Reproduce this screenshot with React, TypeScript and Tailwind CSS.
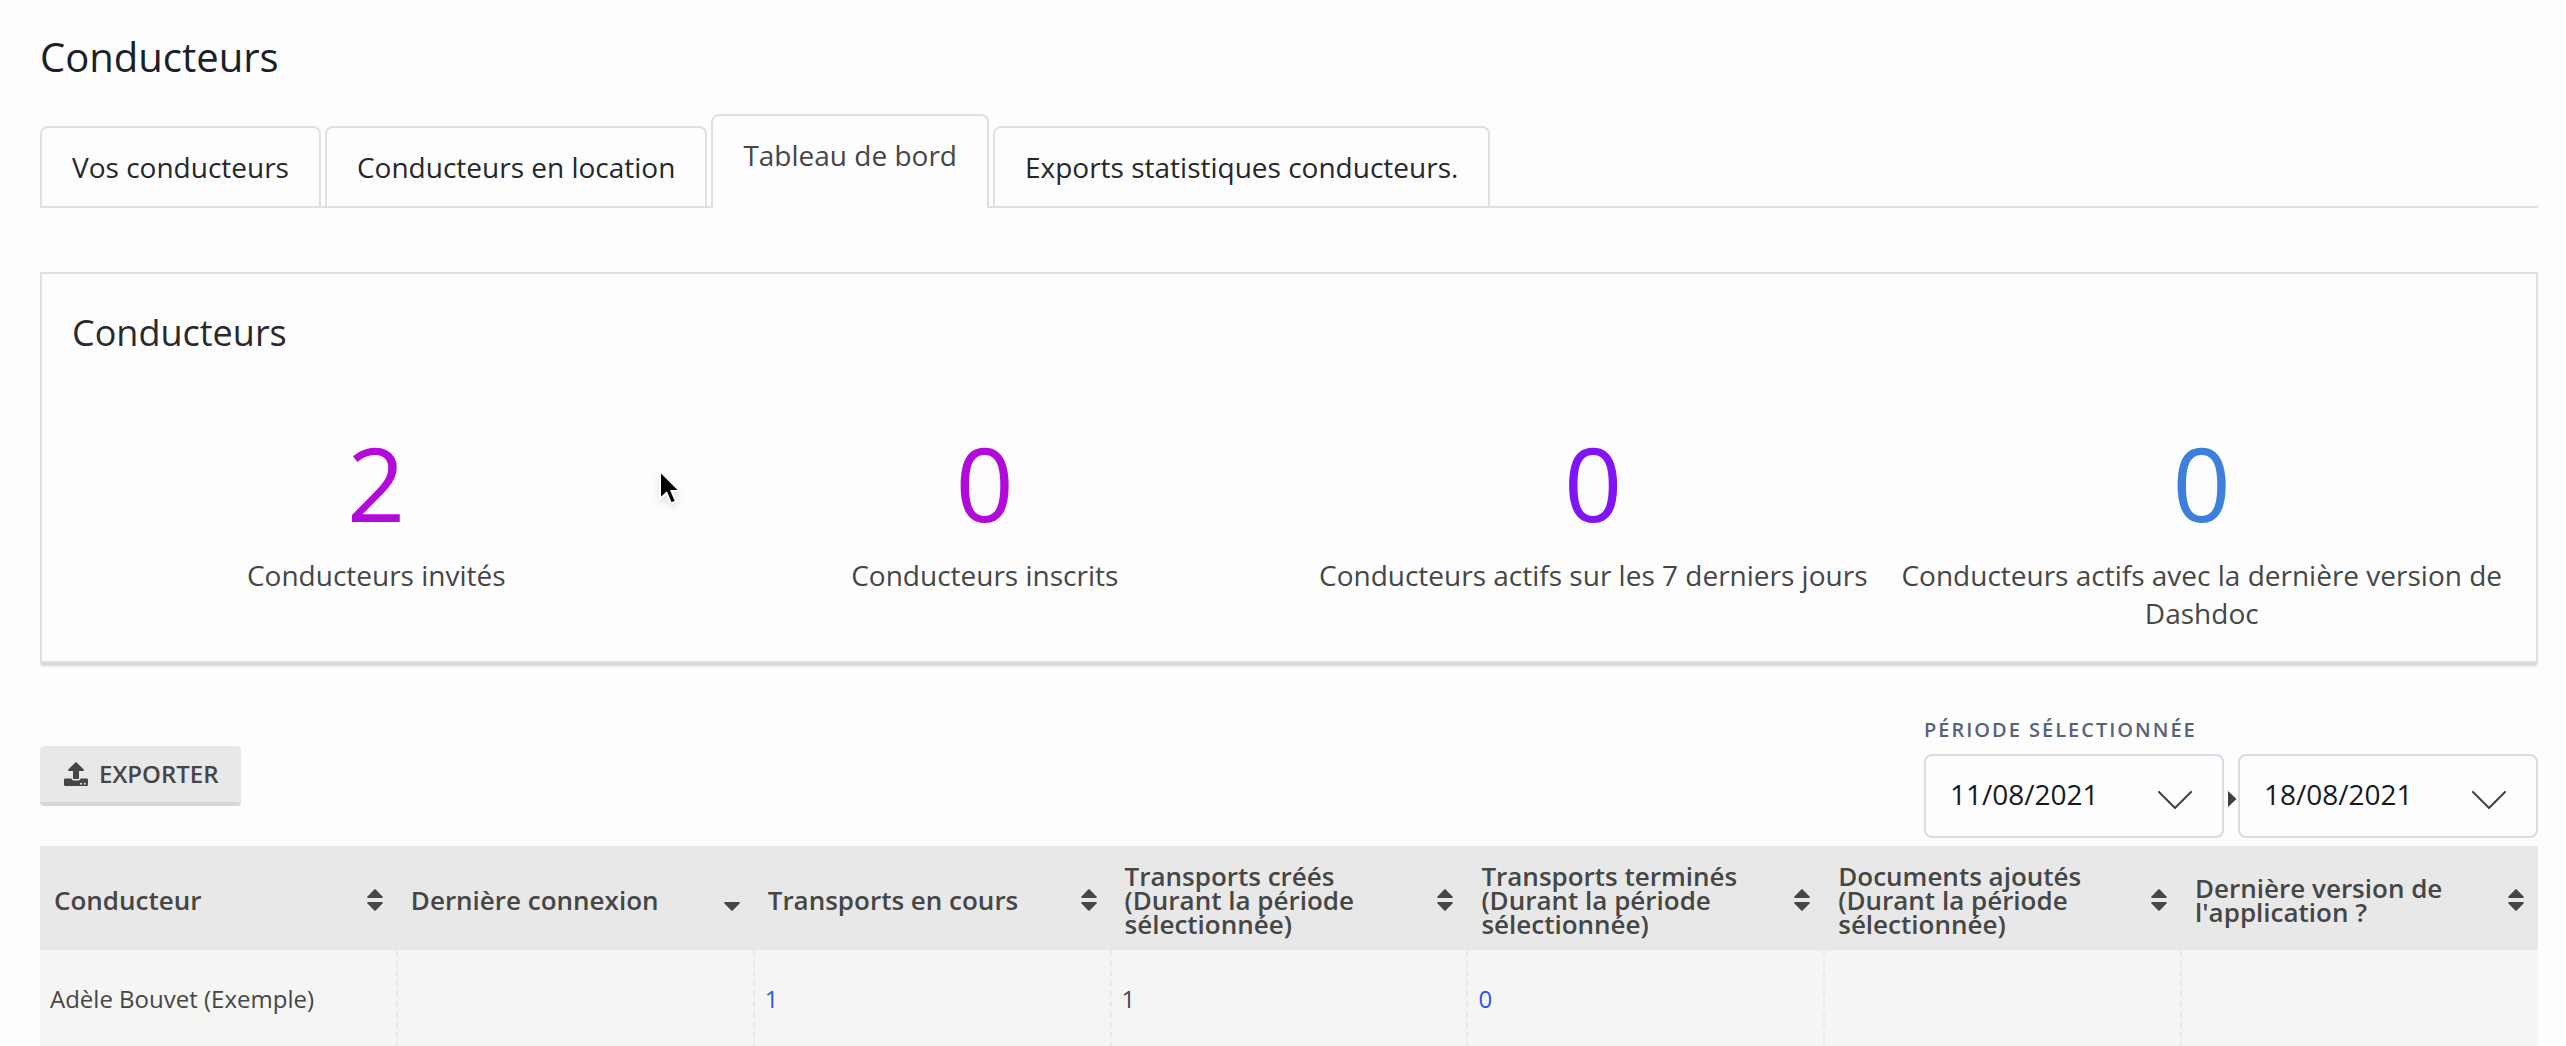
import { useState } from "react";

const tabs = ["Vos conducteurs", "Conducteurs en location", "Tableau de bord", "Exports statistiques conducteurs."];

const stats = [
  { value: 2, label: "Conducteurs invités", color: "text-[#b20adb]" },
  { value: 0, label: "Conducteurs inscrits", color: "text-[#b20adb]" },
  { value: 0, label: "Conducteurs actifs sur les 7 derniers jours", color: "text-[#8014f5]" },
  { value: 0, label: "Conducteurs actifs avec la dernière version de Dashdoc", color: "text-[#3d80dc]" },
];

const columns = [
  "Conducteur",
  "Dernière connexion",
  "Transports en cours",
  "Transports créés (Durant la période sélectionnée)",
  "Transports terminés (Durant la période sélectionnée)",
  "Documents ajoutés (Durant la période sélectionnée)",
  "Dernière version de l'application ?",
];

function SortIcon({ descending }: { descending: boolean }) {
  return (
    <svg viewBox="0 0 16 22" className="h-[22px] w-4 shrink-0" fill="currentColor" aria-hidden="true">
      {!descending && <path d="M7.3.4a1 1 0 0 1 1.4 0l6.8 7.2c.6.7.3 1.4-.5 1.4H1C.2 9-.1 8.300.5 7.600z" />}
      <path d="M1 13h14c.8 0 1.100.7.5 1.400l-6.800 7.200a1 1 0 0 1-1.400 0L.5 14.400C-.1 13.700.2 13 1 13z" />
    </svg>
  );
}

function UploadIcon() {
  return (
    <svg viewBox="0 0 24 24" className="mx-[2px] h-6 w-6" fill="currentColor" aria-hidden="true">
      <path d="M11.300.4a1 1 0 0 1 1.400 0l7 7c.7.7.3 1.600-.6 1.600H15v7.200a.8.800 0 0 1-.8.800H9.800a.8.800 0 0 1-.8-.8V9H4.900c-.9 0-1.300-.9-.6-1.600z" />
      <path
        fillRule="evenodd"
        d="M1.200 16.500H7.500c.2 1.300 1.200 2 2.300 2h4.400c1.100 0 2.100-.7 2.300-2h6.300c.7 0 1.200.5 1.200 1.200v5.100c0 .7-.5 1.200-1.200 1.200H1.200C.5 24 0 23.500 0 22.800v-5.100c0-.7.5-1.200 1.200-1.200zM17 20.800a1 1 0 1 0 0 2 1 1 0 0 0 0-2zm3.700 0a1 1 0 1 0 0 2 1 1 0 0 0 0-2z"
      />
    </svg>
  );
}

function DateSelect({ label, value }: { label: string; value: string }) {
  return (
    <div className="relative w-[300px]">
      <select
        aria-label={label}
        className="h-[84px] w-full appearance-none rounded-lg border-2 border-[#d9dbe6] bg-transparent px-6 pb-1 text-[28px] text-[#16191f]"
      >
        <option>{value}</option>
      </select>
      <svg
        viewBox="0 0 34 18"
        className="pointer-events-none absolute top-[37px] right-8 h-[18px] w-[34px]"
        fill="none"
        stroke="#3f3f3f"
        strokeWidth="2"
        strokeLinecap="round"
        strokeLinejoin="round"
        aria-hidden="true"
      >
        <path d="M1 1l16 16L33 1" />
      </svg>
    </div>
  );
}

function Cursor() {
  return (
    <svg viewBox="0 0 26 38" className="pointer-events-none absolute top-[470px] left-[657px] h-[38px] w-[26px] drop-shadow-md" aria-hidden="true">
      <path d="M3 1v28l6.500-6 4.500 10.500 5-2.200-4.500-10.300H23z" fill="#000" stroke="#fff" strokeWidth="2" />
    </svg>
  );
}

export default function App() {
  const [active, setActive] = useState(2);
  return (
    <main className="relative min-h-screen bg-[#fdfdfd] px-10 pr-7 font-['Open_Sans',sans-serif] text-[#464646]">
      <h1 className="pt-[30px] text-[40px] leading-[54px] text-[#1b2027]">Conducteurs</h1>

      <div role="tablist" className="mt-[30px] flex items-end gap-1 border-b-2 border-[#dfdfe6]">
        {tabs.map((tab, i) => (
          <button
            key={tab}
            role="tab"
            aria-selected={i === active}
            onClick={() => setActive(i)}
            className={
              i === active
                ? "-mb-[2px] h-[94px] rounded-t-lg border-2 border-b-0 border-[#dfdfe6] bg-[#fdfdfd] px-[30px] pb-[14px] text-[28px] text-[#464646]"
                : "h-20 rounded-t-lg border-2 border-b-0 border-[#dfdfe6] px-[30px] text-[28px] text-[#25272b]"
            }
          >
            {tab}
          </button>
        ))}
      </div>

      <section className="mt-16 border-2 border-[#dfdfe4] px-[30px] pt-[34px] pb-[13px] shadow-[0_4px_2px_-1px_#d6d6d6]">
        <h2 className="text-4xl leading-[50px] text-[#2a2a2c]">Conducteurs</h2>
        <div className="mt-[60px] grid grid-cols-4">
          {stats.map((s) => (
            <div key={s.label} className="pb-4 text-center">
              <div className={`text-[102px] leading-[130px] ${s.color}`}>{s.value}</div>
              <div className="mt-2 text-[28px] leading-[38px]">{s.label}</div>
            </div>
          ))}
        </div>
      </section>

      <div className="mt-[53px] flex items-end justify-between pb-2">
        <button className="mb-8 flex h-[60px] items-center gap-[9px] rounded-sm border-b-4 border-[#d6d6dc] bg-[#e8e8e8] px-[22px] text-2xl font-semibold">
          <UploadIcon />
          EXPORTER
        </button>
        <fieldset>
          <legend className="mb-[10px] text-xl leading-7 font-semibold tracking-[2px] text-[#56637a]">PÉRIODE SÉLECTIONNÉE</legend>
          <div className="flex items-center">
            <DateSelect label="Date de début" value="11/08/2021" />
            <svg viewBox="0 0 14 16" className="mt-[6px] h-4 w-[14px]" fill="#3f3f3f" aria-hidden="true">
              <path d="M4 0l8.500 8L4 16z" />
            </svg>
            <DateSelect label="Date de fin" value="18/08/2021" />
          </div>
        </fieldset>
      </div>

      <table className="w-full table-fixed border-collapse">
        <thead>
          <tr className="h-[104px] bg-[#e8e8e8]">
            {columns.map((c, i) => (
              <th key={c} scope="col" className="px-[14px] pt-[3px] text-left text-[26px] leading-6 font-semibold">
                <button className="flex w-full items-center justify-between text-left">
                  <span className="max-w-[270px]">{c}</span>
                  <SortIcon descending={i === 1} />
                </button>
              </th>
            ))}
          </tr>
        </thead>
        <tbody>
          <tr className="h-[98px] bg-[#f5f5f4] text-2xl [&>td]:border-l-2 [&>td]:border-dashed [&>td]:border-[#e9e9e9] [&>td]:px-[10px] [&>td:first-child]:border-l-0">
            <td>Adèle Bouvet (Exemple)</td>
            <td />
            <td><a href="#en-cours" className="text-[#2f55dc]">1</a></td>
            <td>1</td>
            <td><a href="#termines" className="text-[#2f55dc]">0</a></td>
            <td />
            <td />
          </tr>
        </tbody>
      </table>
      <Cursor />
    </main>
  );
}
